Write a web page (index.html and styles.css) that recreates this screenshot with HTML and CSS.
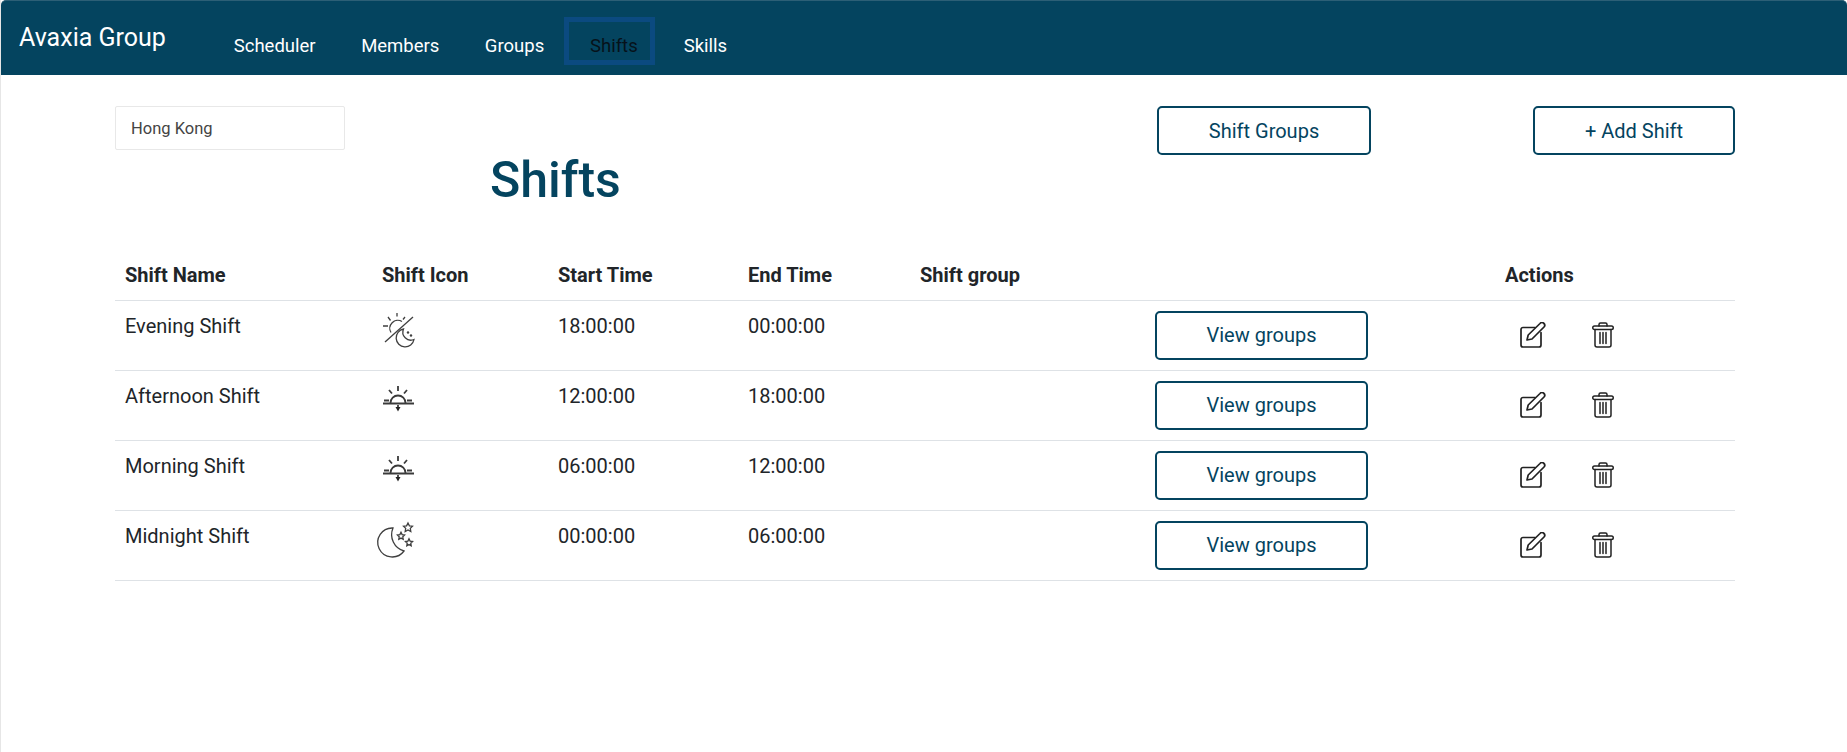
FILE: index.html
```html
<!DOCTYPE html>
<html lang="en">
<head>
<meta charset="utf-8">
<title>Shifts</title>
<link rel="stylesheet" href="styles.css">
</head>
<body>
<div class="app">
  <nav class="navbar">
    <span class="brand">Avaxia Group</span>
    <ul class="nav-list">
      <li><a class="nav-link">Scheduler</a></li>
      <li><a class="nav-link">Members</a></li>
      <li><a class="nav-link">Groups</a></li>
      <li><a class="nav-link active">Shifts</a></li>
      <li><a class="nav-link">Skills</a></li>
    </ul>
  </nav>
  <main class="content">
    <div class="toolbar">
      <div class="select">Hong Kong</div>
      <h1 class="title">Shifts</h1>
      <button class="btn btn-groups">Shift Groups</button>
      <button class="btn btn-add">+ Add Shift</button>
    </div>
    <table class="shifts">
      <colgroup>
        <col class="c1"><col class="c2"><col class="c3"><col class="c4"><col class="c5"><col class="c6"><col class="c7">
      </colgroup>
      <thead>
        <tr><th>Shift Name</th><th>Shift Icon</th><th>Start Time</th><th>End Time</th><th>Shift group</th><th></th><th>Actions</th></tr>
      </thead>
      <tbody>
        <tr>
          <td>Evening Shift</td>
          <td><svg class="shift-icon" viewBox="0 0 34 34"><g class="ln"><path d="M3 29 31 4"/><path d="M15 0v3.500M6 4l2.500 3.500M1 13h5"/><path d="M23 4l-2 2.500M9 19.500a8 8 0 0 1 11-11"/><path d="M21.500 16a8 8 0 0 0 10.500 10.500 9 9 0 1 1-10.500-10.500z"/></g><circle class="dot" cx="26" cy="19.500" r="1.200"/><circle class="dot" cx="29" cy="22.500" r="1.200"/></svg></td>
          <td>18:00:00</td><td>00:00:00</td><td></td>
          <td><button class="btn btn-view">View groups</button></td>
          <td><div class="actions">
            <svg class="act" viewBox="0 0 26 26"><use href="#edit"/></svg>
            <svg class="act" viewBox="0 0 26 26"><use href="#trash"/></svg>
          </div></td>
        </tr>
        <tr>
          <td>Afternoon Shift</td>
          <td><svg class="shift-icon" viewBox="0 0 34 34"><use href="#sunset"/></svg></td>
          <td>12:00:00</td><td>18:00:00</td><td></td>
          <td><button class="btn btn-view">View groups</button></td>
          <td><div class="actions">
            <svg class="act" viewBox="0 0 26 26"><use href="#edit"/></svg>
            <svg class="act" viewBox="0 0 26 26"><use href="#trash"/></svg>
          </div></td>
        </tr>
        <tr>
          <td>Morning Shift</td>
          <td><svg class="shift-icon" viewBox="0 0 34 34"><use href="#sunset"/></svg></td>
          <td>06:00:00</td><td>12:00:00</td><td></td>
          <td><button class="btn btn-view">View groups</button></td>
          <td><div class="actions">
            <svg class="act" viewBox="0 0 26 26"><use href="#edit"/></svg>
            <svg class="act" viewBox="0 0 26 26"><use href="#trash"/></svg>
          </div></td>
        </tr>
        <tr>
          <td>Midnight Shift</td>
          <td><svg class="shift-icon" viewBox="0 0 34 34"><g class="ln"><path d="M11 5A14.500 14.500 0 1 0 22 28 17 17 0 0 1 11 5z"/><path d="M26 0l1.400 2.800 3.100.4-2.200 2.200.5 3.100L26 7l-2.800 1.500.5-3.100-2.200-2.200 3.100-.4z"/><path d="M19 9.300l1.100 2.300 2.500.4-1.800 1.800.4 2.500-2.200-1.200-2.200 1.200.4-2.500-1.800-1.800 2.500-.4z"/><path d="M27 15.800l1.100 2.300 2.500.4-1.800 1.800.4 2.500-2.200-1.200-2.200 1.200.4-2.500-1.800-1.800 2.500-.4z"/></g></svg></td>
          <td>00:00:00</td><td>06:00:00</td><td></td>
          <td><button class="btn btn-view">View groups</button></td>
          <td><div class="actions">
            <svg class="act" viewBox="0 0 26 26"><use href="#edit"/></svg>
            <svg class="act" viewBox="0 0 26 26"><use href="#trash"/></svg>
          </div></td>
        </tr>
      </tbody>
    </table>
  </main>
</div>
<svg class="defs" width="0" height="0">
  <defs>
    <g id="sunset" fill="none" stroke="#3a3a3a" stroke-width="1.800">
      <path d="M1 20.500h31" stroke-width="2"/>
      <path d="M8.500 20a7.500 7.500 0 0 1 15 0"/>
      <path d="M16 3v5M7 7l3 3.500M25 7l-3 3.500"/>
      <path d="M2 17.500h5M25 17.500h5" stroke-width="2"/>
      <path d="M16 22v2"/>
      <path d="M13.500 24h5L16 28.500z" fill="#222" stroke="none"/>
    </g>
    <g id="edit" fill="none" stroke="#222" stroke-width="1.700" stroke-linejoin="round" stroke-linecap="round">
      <path d="M15 5.500H3a2 2 0 0 0-2 2V23a2 2 0 0 0 2 2H19a2 2 0 0 0 2-2V10.500"/>
      <path d="M7 18l1.200-5L20 1.500a2 2 0 0 1 4 3.500L12 17z"/>
    </g>
    <g id="trash" fill="none" stroke="#222" stroke-width="1.500" stroke-linejoin="round" stroke-linecap="round">
      <path d="M9 4V2.500A1.500 1.500 0 0 1 10.500 1h5A1.500 1.500 0 0 1 17 2.500V4"/>
      <path d="M4.500 4h17a1.500 1.500 0 0 1 0 3.500h-17a1.500 1.500 0 0 1 0-3.500z"/>
      <path d="M5 7.500V23a2 2 0 0 0 2 2h12a2 2 0 0 0 2-2V7.500"/>
      <path d="M10 10.500V21.500M13 10.500V21.500M16 10.500V21.500"/>
    </g>
  </defs>
</svg>
</body>
</html>
```
FILE: styles.css
```css
* { box-sizing: border-box; }
html, body { margin: 0; height: 100%; }
body { background: #fff; font-family: Roboto, "Liberation Sans", sans-serif; color: #212529; }
.app { min-height: 752px; border-left: 1px solid #e6e6e6; }
.navbar {
  height: 75px; background: #04445f; border-radius: 5px 5px 0 0;
  border-top: 1px solid #2c5f76;
  display: flex; align-items: flex-start; padding-left: 18px;
}
.brand { color: #fff; font-size: 25px; line-height: 36px; margin-top: 19px; width: 192px; white-space: nowrap; }
.nav-list { list-style: none; display: flex; margin: 0; padding: 0; }
.nav-link {
  display: block; font-size: 18.500px; line-height: 27px; color: #fff;
  padding: 32px 22.750px 0; height: 60px;
}
.nav-link.active {
  color: #06121a; border: 5px solid #0b4a80; margin: 16px 6px 0 -3px; height: 48px;
  padding: 11px 0 0 21px; width: 91px;
}
.content { padding: 31px 112px 0 114px; }
.toolbar { display: flex; align-items: flex-start; height: 146px; }
.select {
  width: 230px; height: 44px; border: 1px solid #e8e8e8; border-radius: 2px;
  font-size: 16.500px; line-height: 43px; padding-left: 15px; color: #444;
}
.title {
  margin: 44px 0 0 145px; width: 667px; font-size: 50px; font-weight: 500;
  line-height: 60px; color: #04445f;
}
.btn {
  background: #fff; border: 2px solid #04445f; border-radius: 5px; color: #04445f;
  font-family: inherit; font-size: 20px; height: 49px; padding: 0;
}
.btn-groups { width: 214px; }
.btn-add { width: 202px; margin-left: auto; }
.shifts { width: 100%; border-collapse: collapse; table-layout: fixed; font-size: 20px; }
.c1 { width: 257px; } .c2 { width: 176px; } .c3 { width: 190px; } .c4 { width: 172px; }
.c5 { width: 235px; } .c6 { width: 350px; } .c7 { width: 240px; }
.shifts th { text-align: left; font-weight: 700; height: 48px; padding: 0 10px 2px; border-bottom: 1px solid #dee2e6; }
.shifts td { height: 70px; padding: 10px; vertical-align: top; line-height: 31px; border-bottom: 1px solid #dee2e6; }
.shift-icon { width: 34px; height: 34px; display: block; margin-top: 2px; overflow: visible; }
.ln { fill: none; stroke: #3f3f3f; stroke-width: 1.300; }
.dot { fill: #3f3f3f; }
.btn-view { width: 213px; height: 49px; display: block; }
.actions { display: flex; gap: 44px; padding: 11px 0 0 15px; }
.act { width: 26px; height: 26px; display: block; }
.defs { position: absolute; }
```
